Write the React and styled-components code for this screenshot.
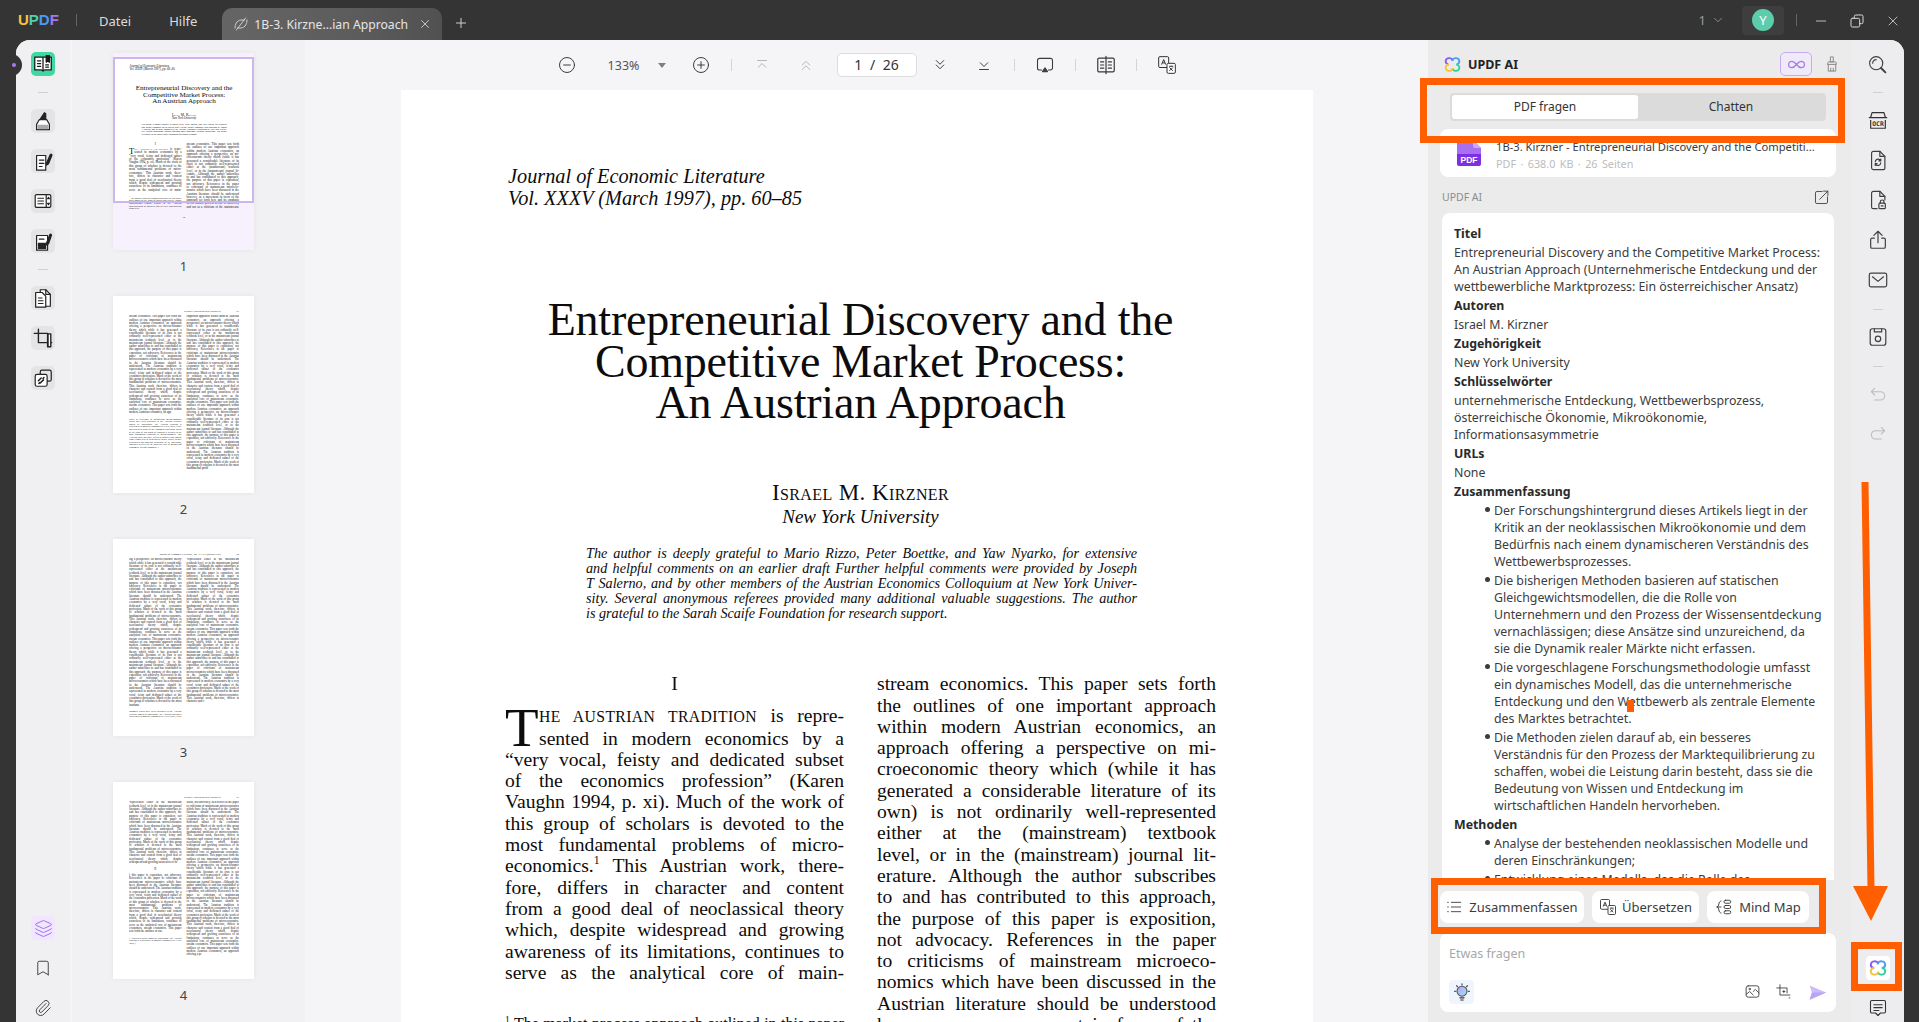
import React from "react";
import styled, { createGlobalStyle } from "styled-components";
import { Layers, Bookmark, Paperclip, Minus, Plus, X, ChevronDown } from "lucide-react";

const GlobalStyle = createGlobalStyle`
  html, body { margin: 0; padding: 0; background: #343434; }
  body { font-family: "Noto Sans", "Open Sans", sans-serif; overflow: hidden; }
  * { box-sizing: border-box; }
`;

const ORANGE = "#ff5f00";
const SERIF = `"Liberation Serif", serif`;

const Shell = styled.div`
  position: relative;
  width: 100%;
  height: 100vh;
  background: #343434;
  display: flex;
  flex-direction: column;
  overflow: hidden;
`;

/* ---------- title bar ---------- */
const TitleBar = styled.header`
  height: 40px;
  flex: none;
  display: flex;
  align-items: flex-start;
  padding-left: 18px;
  color: #e4e4e4;
`;
const Logo = styled.div`
  width: 38px;
  height: 40px;
  font: 700 15px/40px "Liberation Sans", sans-serif;
  display: flex;
`;
const LogoLetter = styled.span`
  color: ${(p) => p.$c};
`;
const BarSep = styled.div`
  width: 1px;
  height: 12px;
  background: #646464;
  margin: ${(p) => (p.$top !== undefined ? p.$top : 14)}px 0 0 ${(p) => p.$ml}px;
`;
const MenuItem = styled.div`
  font-size: 13px;
  line-height: 42px;
  margin-left: ${(p) => p.$ml}px;
  color: #dcdcdc;
`;
const Tab = styled.div`
  width: 220px;
  height: 32px;
  margin: 8px 0 0 25px;
  border-radius: 10px 10px 0 0;
  background: linear-gradient(90deg, #656565, #5c5c5c 60%, #515151);
  display: flex;
  align-items: center;
  padding-left: 11px;
  font-size: 12.2px;
  color: #e6e6e6;
  white-space: nowrap;
`;
const TabTitle = styled.span`
  margin-left: 5px;
  width: 164px;
`;
const NewTab = styled.div`
  margin: 14px 0 0 11px;
  color: #d8d8d8;
  height: 16px;
`;
const BarRight = styled.div`
  margin-left: auto;
  display: flex;
  align-items: center;
  height: 40px;
  padding-right: 18px;
`;
const PageCount = styled.div`
  font-size: 13px;
  color: #9a9a9a;
  display: flex;
  align-items: center;
  gap: 5px;
  margin-right: 17px;
`;
const AvatarTile = styled.div`
  width: 42px;
  height: 29px;
  background: #3e3e3e;
  border-radius: 4px;
  display: flex;
  align-items: center;
  justify-content: center;
`;
const Avatar = styled.div`
  width: 22px;
  height: 22px;
  border-radius: 50%;
  background: #5ccdaa;
  color: #fff;
  font-size: 13px;
  line-height: 22px;
  text-align: center;
`;
const WinBtn = styled.div`
  width: 16px;
  height: 16px;
  margin-left: ${(p) => p.$ml}px;
  color: #dadada;
`;

/* ---------- body ---------- */
const Body = styled.div`
  flex: 1;
  min-height: 0;
  display: flex;
  margin: 0 15px 0 16px;
  border-radius: 14px 14px 0 0;
  overflow: hidden;
  background: #f5f4f6;
`;
const LeftRail = styled.nav`
  width: 54px;
  flex: none;
  background: #f0eff1;
  display: flex;
  flex-direction: column;
  align-items: center;
  padding: 12px 0 0 0;
`;
const Tile = styled.div`
  width: 24px;
  height: 24px;
  flex: none;
  border-radius: 5px;
  background: ${(p) => p.$bg || "#e4e3e5"};
  display: flex;
  align-items: center;
  justify-content: center;
  margin-top: ${(p) => p.$mt || 0}px;
  margin-bottom: ${(p) => p.$mb || 0}px;
`;
const RailRule = styled.div`
  width: 10px;
  height: 1px;
  background: #d0d0d2;
  margin: ${(p) => p.$m}px 0;
  flex: none;
`;
const RailPush = styled.div`
  flex: 1;
`;
const PlainIcon = styled.div`
  height: ${(p) => p.$h || 40}px;
  padding-top: ${(p) => p.$pt || 0}px;
  flex: none;
  display: flex;
  align-items: center;
  color: #444;
`;
const Notch = styled.div`
  position: absolute;
  left: 10px;
  top: 54px;
  width: 12px;
  height: 22px;
  border-radius: 0 11px 11px 0;
  background: #343434;
  &::after {
    content: "";
    position: absolute;
    left: 2px;
    top: 9px;
    width: 4px;
    height: 4px;
    border-radius: 50%;
    background: #a27bea;
  }
`;

/* ---------- thumbnails ---------- */
const ThumbColumn = styled.aside`
  width: 235px;
  flex: none;
  background: #f1f0f2;
  padding: 13px 0 0 41px;
  overflow: hidden;
  border-left: 2px solid #f5f4f6;
`;
const ThumbItem = styled.div`
  width: 141px;
  height: 243px;
  flex: none;
`;
const ThumbSheet = styled.div`
  position: relative;
  width: 141px;
  height: 197px;
  background: #fff;
  overflow: hidden;
  box-shadow: 0 0 5px rgba(0, 0, 0, 0.06);
`;
const ThumbZoom = styled.div`
  zoom: 0.1546;
  width: 912px;
`;
const ViewRect = styled.div`
  position: absolute;
  left: 0;
  top: 4px;
  width: 141px;
  height: 146px;
  border: 2px solid #cdb6ef;
  box-shadow: 0 0 0 400px rgba(165, 105, 245, 0.09);
`;
const ThumbNum = styled.div`
  font-size: 13px;
  line-height: 20px;
  margin-top: 6px;
  text-align: center;
  color: #444;
`;
const MiniPage = styled.div`
  padding: 90px 97px 0 104px;
  font: 19px/21.3px ${SERIF};
  color: #111;
`;
const MiniHead = styled.div`
  display: flex;
  justify-content: flex-end;
  font-size: 17px;
  height: 36px;
  gap: 100px;
`;
const MiniCols = styled.div`
  display: grid;
  grid-template-columns: 339px 339px;
  gap: 33px;
  height: 1040px;
  overflow: hidden;
`;
const MiniCol = styled.div`
  text-align: justify;
`;
const MiniFoot = styled.div`
  font-size: 15px;
  line-height: 16.5px;
  margin-top: 22px;
`;
const MiniSection = styled.div`
  text-align: center;
  margin: 22px 0;
`;

/* ---------- document ---------- */
const Main = styled.main`
  flex: 1;
  min-width: 0;
  display: flex;
  flex-direction: column;
`;
const DocTools = styled.div`
  height: 50px;
  flex: none;
  display: flex;
  align-items: center;
  justify-content: center;
  color: #333;
`;
const Tool = styled.div`
  width: 24px;
  height: 24px;
  flex: none;
  margin-left: ${(p) => p.$ml || 0}px;
  color: ${(p) => (p.$off ? "#b5b5b5" : "#3a3a3a")};
  display: flex;
  align-items: center;
  justify-content: center;
`;
const ZoomLabel = styled.div`
  width: 36px;
  margin-left: 27px;
  font-size: 12.5px;
  color: #555;
  text-align: center;
`;
const Caret = styled.div`
  width: 0;
  height: 0;
  margin-left: 16px;
  margin-right: 12px;
  border-left: 4px solid transparent;
  border-right: 4px solid transparent;
  border-top: 5px solid #808080;
`;
const ToolSep = styled.div`
  width: 1px;
  height: 12px;
  background: #d5d5d5;
  margin-left: ${(p) => p.$ml || 18}px;
`;
const PageInput = styled.div`
  width: 80px;
  height: 24px;
  margin-left: 19px;
  flex: none;
  background: #fff;
  border: 1px solid #dcdcdc;
  border-radius: 5px;
  font-size: 14px;
  line-height: 22px;
  text-align: center;
  color: #333;
  word-spacing: 4px;
`;
const Scroller = styled.div`
  flex: 1;
  min-height: 0;
  overflow: hidden;
  padding-left: 96px;
`;
const Paper = styled.article`
  width: 912px;
  background: #fff;
  color: #0c0c0c;
  font-family: ${SERIF};
  padding: 75px 97px 40px 104px;
`;
const Journal = styled.div`
  font-style: italic;
  font-size: 20.3px;
  line-height: 22px;
  padding-left: 3px;
`;
const PaperTitle = styled.h1`
  margin: 90px 0 0;
  font-weight: 400;
  font-size: 46px;
  line-height: 41.6px;
  text-align: center;
  white-space: nowrap;
  letter-spacing: -0.2px;
`;
const PaperAuthor = styled.div`
  margin-top: 58px;
  font-size: 23px;
  line-height: 22px;
  letter-spacing: 0.4px;
  text-align: center;
  font-variant: small-caps;
`;
const PaperAffil = styled.div`
  margin-top: 1px;
  font-size: 19px;
  line-height: 24px;
  font-style: italic;
  text-align: center;
`;
const Abstract = styled.div`
  margin: 17px 0 0 81px;
  width: 551px;
  font-style: italic;
  font-size: 14.2px;
  line-height: 15.1px;
`;
const Columns = styled.div`
  display: grid;
  grid-template-columns: 339px 339px;
  gap: 33px;
  margin-top: 52px;
`;
const Column = styled.div`
  font-size: 19.6px;
  line-height: 21.3px;
`;
const Line = styled.div`
  white-space: nowrap;
  text-align: justify;
  text-align-last: justify;
`;
const LastLine = styled.div`
  white-space: nowrap;
`;
const SectionNo = styled.div`
  text-align: center;
  margin-bottom: 10.7px;
`;
const DropCap = styled.span`
  float: left;
  width: 34px;
  height: 42px;
  font-size: 55px;
  line-height: 46px;
`;
const SmallCaps = styled.span`
  font-size: 0.8em;
  letter-spacing: 0.4px;
`;
const Sup = styled.sup`
  font-size: 0.6em;
  line-height: 0;
`;
const Footnote = styled.div`
  margin-top: 32px;
  font-size: 16px;
  line-height: 17.5px;
  text-align: justify;
`;
const PageNo = styled.div`
  margin-top: 30px;
  text-align: center;
  font-size: 16px;
`;

/* ---------- AI panel ---------- */
const Panel = styled.section`
  width: 423px;
  flex: none;
  background: #ebebec;
  padding: 0 15px 10px 12px;
  display: flex;
  flex-direction: column;
  min-height: 0;
`;
const PanelHead = styled.div`
  height: 48px;
  flex: none;
  display: flex;
  align-items: center;
  padding-left: 3px;
`;
const PanelName = styled.div`
  margin-left: 6px;
  font-size: 12.5px;
  font-weight: 700;
  color: #222;
`;
const Unlimited = styled.div`
  margin-left: auto;
  width: 32px;
  height: 24px;
  border: 1px solid #c9a9f3;
  border-radius: 5px;
  background: #efe9f8;
  color: #a57de8;
  display: flex;
  align-items: center;
  justify-content: center;
`;
const Broom = styled.div`
  margin: 0 -6px 0 10px;
  width: 20px;
  height: 20px;
  color: #8b8b8b;
`;
const Segmented = styled.div`
  height: 28px;
  flex: none;
  margin: 5px 10px 0;
  padding: 2px;
  background: #dbdbdb;
  border-radius: 4px;
  display: grid;
  grid-template-columns: 1fr 1fr;
`;
const Segment = styled.div`
  background: ${(p) => (p.$on ? "#fff" : "transparent")};
  border-radius: 3px;
  font-size: 12px;
  line-height: 24px;
  text-align: center;
  color: #333;
`;
const FileCard = styled.div`
  height: 48px;
  flex: none;
  margin-top: 8px;
  background: #fff;
  border-radius: 8px;
  display: flex;
  align-items: center;
  padding-left: 17px;
  gap: 15px;
`;
const FileText = styled.div`
  min-width: 0;
  padding-top: 3px;
`;
const FileName = styled.div`
  font-size: 11.2px;
  line-height: 17px;
  color: #3a3a3a;
  white-space: nowrap;
`;
const FileMeta = styled.div`
  margin-top: 1px;
  font-size: 10.8px;
  line-height: 15px;
  word-spacing: 1.6px;
  color: #bcbcbc;
`;
const LabelRow = styled.div`
  height: 36px;
  flex: none;
  display: flex;
  align-items: center;
  justify-content: space-between;
  padding: 4px 6px 0 2px;
  font-size: 10.5px;
  color: #8c8c8c;
`;
const AnswerCard = styled.div`
  flex: 1;
  min-height: 0;
  overflow: hidden;
  margin: 0 2px;
  padding: 10px 12px 0;
  background: #fff;
  border-radius: 8px 8px 0 0;
  font-size: 12.35px;
  line-height: 17px;
  color: #3c3c3c;
  white-space: nowrap;
`;
const Heading = styled.div`
  margin-top: 2px;
  font-weight: 700;
  color: #2a2a2a;
`;
const Para = styled.div`
  margin-top: 2px;
`;
const Bullet = styled.div`
  margin-top: 2px;
  display: flex;
  align-items: flex-start;
`;
const Dot = styled.span`
  width: 5px;
  height: 5px;
  margin: 5px 4px 0 31px;
  border-radius: 50%;
  background: #3c3c3c;
  flex: none;
`;
const Actions = styled.div`
  height: 53px;
  flex: none;
  display: flex;
  gap: 8px;
  padding-top: 11px;
`;
const ActionBtn = styled.div`
  height: 32px;
  width: ${(p) => p.$w}px;
  flex: none;
  background: #fff;
  border-radius: 8px;
  display: flex;
  align-items: center;
  justify-content: center;
  gap: ${(p) => p.$gap || 7}px;
  font-size: 13px;
  color: #3c3c3c;
  white-space: nowrap;
`;
const Composer = styled.div`
  height: 79px;
  flex: none;
  background: #fff;
  border-radius: 8px;
  padding: 12px 9px 0;
  display: flex;
  flex-direction: column;
`;
const Placeholder = styled.div`
  font-size: 12.5px;
  line-height: 18px;
  color: #a8a8a8;
`;
const ComposerRow = styled.div`
  margin-top: 17px;
  display: flex;
  align-items: center;
  height: 24px;
`;
const BulbTile = styled.div`
  width: 25px;
  height: 24px;
  border-radius: 4px;
  background: #eef5fc;
  display: flex;
  align-items: center;
  justify-content: center;
`;
const ComposerIcon = styled.div`
  margin-left: ${(p) => p.$ml}px;
  width: 18px;
  height: 18px;
  color: #444;
`;

/* ---------- right rail ---------- */
const RightRail = styled.nav`
  width: 53px;
  flex: none;
  background: #edecee;
  display: flex;
  flex-direction: column;
  align-items: center;
  padding: 4px 0 0;
  color: #3f3f3f;
`;
const RailSlot = styled.div`
  height: ${(p) => p.$h || 40}px;
  padding-top: ${(p) => p.$pt || 0}px;
  flex: none;
  display: flex;
  align-items: center;
  justify-content: center;
  color: ${(p) => (p.$off ? "#bcbcbc" : "#3f3f3f")};
`;
const AiTile = styled.div`
  width: 24px;
  height: 24px;
  border-radius: 4px;
  background: #fff;
  display: flex;
  align-items: center;
  justify-content: center;
`;

/* ---------- orange marks drawn over the screenshot ---------- */
const Callout = styled.div`
  position: absolute;
  border: 7px solid ${ORANGE};
  pointer-events: none;
`;
const TabsCallout = styled(Callout)`
  left: 1420px;
  top: 78px;
  width: 425px;
  height: 65px;
`;
const ActionsCallout = styled(Callout)`
  left: 1431px;
  top: 878px;
  width: 395px;
  height: 56px;
`;
const AiCallout = styled(Callout)`
  left: 1851px;
  top: 942px;
  width: 51px;
  height: 49px;
`;
const ArrowMark = styled.svg`
  position: absolute;
  left: 1850px;
  top: 478px;
`;
const Speck = styled.div`
  position: absolute;
  left: 1627px;
  top: 700px;
  width: 7px;
  height: 12px;
  background: ${ORANGE};
`;

/* ---------- icons ---------- */
const Ico = ({ s = 20, c = "currentColor", w = 1.3, children }) => (
  <svg viewBox="0 0 24 24" width={s} height={s} fill="none" stroke={c} strokeWidth={w} strokeLinecap="round" strokeLinejoin="round">
    {children}
  </svg>
);

const AiLogo = ({ s = 20 }) => (
  <svg viewBox="0 0 24 24" width={s} height={s} fill="none" strokeWidth="2.3" strokeLinecap="round">
    <path stroke="#8a5cf6" d="M12 6.5C11 3.2 4 2.8 3.4 7.5 3.1 10 5 11.5 6.5 12" />
    <path stroke="#4a9ff5" d="M12 6.5C13 3.2 20 2.8 20.6 7.5 20.9 10 19 11.5 17.5 12" />
    <path stroke="#35d0a0" d="M17.5 12C19 12.5 20.9 14 20.6 16.5 20 21.2 13 20.8 12 17.5" />
    <path stroke="#f7c33c" d="M12 17.5C11 20.8 4 21.2 3.4 16.5 3.1 14 5 12.5 6.5 12" />
  </svg>
);

const BookIcon = () => (
  <Ico s={22} c="#1a1a1a" w={1.4}>
    <path fill="#fff" d="M3 4.500h18v14h-6.600c-1 0-1.800.4-2.400 1-.6-.6-1.400-1-2.400-1H3z" />
    <path d="M12 5v14.500M6 8.500h3.500M6 11.500h3.500M6 14.500h3.500M15 13h3M15 15.500h3" />
    <path fill="#1a1a1a" d="M15.500 3h3.500v7l-1.700-1.400-1.800 1.400z" />
  </Ico>
);
const MarkerIcon = () => (
  <svg viewBox="0 0 24 24" width="22" height="22" fill="none" stroke="#222" strokeWidth="1.3" strokeLinejoin="round">
    <path fill="#222" d="M9 10l4.500-7 1.500 1v6z" />
    <path fill="#fff" d="M8 10.500h8l3 5v6H5v-6z" />
    <path fill="#aaa" stroke="none" d="M6 16h12v5H6z" />
  </svg>
);
const EditDocIcon = () => (
  <Ico s={22} c="#222">
    <path fill="#fff" d="M5 6h10v16H5z" />
    <path d="M8 11h5M8 14.500h5M8 18h3" />
    <path fill="#222" d="M16 14l4-9c.7-1 2-.4 1.700.7L18 15l-2 1.500z" />
  </Ico>
);
const FormIcon = () => (
  <Ico s={22} c="#222">
    <rect x="3.500" y="5" width="17" height="14" rx="1.500" fill="#fff" />
    <path d="M15.500 5v14M6.500 9h6M6.500 12h6M6.500 15h6" />
    <path fill="#222" d="M17 9.500l1-1.500 1 1.500zM17 14.500l1 1.500 1-1.500z" />
  </Ico>
);
const RedactIcon = () => (
  <Ico s={22} c="#222">
    <path fill="#fff" d="M5 6h12v16H5z" />
    <path d="M8 10h5" />
    <path fill="#222" d="M7 14.500h8v3H7zM7 19h8v1H7z" />
    <path fill="#222" d="M16 14l3.500-9c.7-1 2-.4 1.700.7L18 15l-2 1.500z" />
  </Ico>
);
const PagesIcon = () => (
  <Ico s={22} c="#222">
    <path fill="#fff" d="M9 3h6l5 5v13H9z" />
    <path d="M15 3v5h5" />
    <path fill="#fff" d="M4 6h7l4 4v12H4z" />
    <path d="M7 12h4M7 15h5M7 18h5" />
  </Ico>
);
const CropIcon = () => (
  <Ico s={22} c="#222" w={1.5}>
    <path d="M7 2.500V17h14.500M2.500 7H17v14.500" />
    <path d="M17.500 7.500h3v14h-3z" fill="#fff" />
  </Ico>
);
const OverlapIcon = () => (
  <Ico s={22} c="#222">
    <rect x="9" y="3.500" width="12" height="12" rx="2" />
    <rect x="3.500" y="8" width="13" height="13" rx="2" fill="#fff" />
    <path d="M7 15l3-3M9 17.500l3.500-3.500M7.500 18l1-1M12 12.500l1-1" strokeWidth="1.700" />
  </Ico>
);
const TabIcon = () => (
  <svg viewBox="0 0 24 24" width="16" height="16" fill="none" stroke="#cfcfcf" strokeWidth="1.500" strokeLinecap="round">
    <path d="M3 18c0-5 2-11 9-12l5 0" />
    <path d="M21 6c0 5-2 11-9 12l-5 0" />
    <path d="M5 21L19 3" />
  </svg>
);
const InfinityIcon = () => (
  <Ico s={19} w={1.600}>
    <path d="M12 12c-2-2.500-3.500-4-6-4a4 4 0 0 0 0 8c2.500 0 4-1.500 6-4zm0 0c2 2.500 3.500 4 6 4a4 4 0 0 0 0-8c-2.500 0-4 1.500-6 4z" />
  </Ico>
);
const BroomIcon = () => (
  <Ico s={20} w={1.200}>
    <path d="M10.500 3.500h3v6h-3zM7 10.500c0-.600.400-1 1-1h8c.600 0 1 .400 1 1v2H7zM7.500 12.500v8h9v-8M10.500 17v3.500M13.500 17v3.500" />
  </Ico>
);
const PdfBadge = () => (
  <svg viewBox="0 0 24 26" width="24" height="26">
    <path fill="#a86ff0" d="M2 0h14l8 8v10H0V2a2 2 0 0 1 2-2z" />
    <path fill="#7d2fe3" d="M0 14h24v10a2 2 0 0 1-2 2H2a2 2 0 0 1-2-2z" />
    <path fill="#cda8f7" d="M16 0l8 8h-6a2 2 0 0 1-2-2z" />
    <text x="12" y="23" textAnchor="middle" fontSize="8.500" fontWeight="700" fontFamily="Liberation Sans, sans-serif" fill="#fff">PDF</text>
  </svg>
);
const OpenOut = () => (
  <Ico s={17} c="#444">
    <path d="M13 3.500H5.500a2 2 0 0 0-2 2v13a2 2 0 0 0 2 2h13a2 2 0 0 0 2-2V11" />
    <path d="M9.500 14.500L21 3M15 3h6v6" />
  </Ico>
);
const ListIcon = () => (
  <Ico s={16} c="#333">
    <path d="M8 5h14M8 12h14M8 19h14M2.500 5h1M2.500 12h1M2.500 19h1" />
  </Ico>
);
const TranslateIcon = ({ s = 18 }) => (
  <svg viewBox="0 0 24 24" width={s} height={s} fill="none" stroke="#333" strokeWidth="1.200" strokeLinejoin="round">
    <rect x="2" y="2" width="12" height="13" rx="1.500" />
    <rect x="12" y="10" width="10" height="12" rx="1.500" fill="#fff" />
    <path d="M5.500 11.500L8 5.500l2.500 6M6.500 9.500h3M14.500 13.500h5M17 13v1M15 19l4-4M15 15l4 4" />
  </svg>
);
const MindIcon = () => (
  <Ico s={18} c="#333" w={1.200}>
    <path d="M8 4C4 4 6 12 2.500 12 6 12 4 20 8 20M2.500 12H8" />
    <rect x="12" y="3" width="9" height="4" rx="2" />
    <rect x="12" y="10" width="9" height="4" rx="2" />
    <rect x="12" y="17" width="9" height="4" rx="2" />
  </Ico>
);
const BulbIcon = () => (
  <svg viewBox="0 0 24 24" width="20" height="20" fill="none" stroke="#333" strokeWidth="1.300" strokeLinecap="round">
    <defs>
      <linearGradient id="bulbFill" x1="0" y1="0" x2="1" y2="1">
        <stop offset="0" stopColor="#a9a6f5" />
        <stop offset="1" stopColor="#a8dcf6" />
      </linearGradient>
    </defs>
    <circle cx="12" cy="11" r="6" fill="url(#bulbFill)" stroke="#555" />
    <path d="M9.500 19h5M10.500 21.500h3M12 2v1.500M3 11h1.500M19.500 11H21M5.500 4.500l1 1M18.500 4.500l-1 1" />
  </svg>
);
const ImageIcon = () => (
  <Ico s={17}>
    <rect x="3" y="4" width="18" height="16" rx="3" />
    <path d="M3 16l5-4 5 5M13 12l3-3 5 5" />
    <circle cx="8" cy="8.500" r="1" />
  </Ico>
);
const SnipIcon = () => (
  <Ico s={17}>
    <path d="M7 2.500V17h14M2.500 7H17v7" />
    <path d="M11 12h3M12.500 10.500v3M20 21h1" />
  </Ico>
);
const SendIcon = () => (
  <svg viewBox="0 0 24 24" width="19" height="19">
    <path fill="#cdbcf8" d="M2 3l21 9-21 9 3-9z" />
    <path fill="#b9a4f5" d="M5 12h18L2 21z" />
  </svg>
);
const SearchIcon = () => (
  <Ico s={21}>
    <circle cx="10.500" cy="10.500" r="7.500" />
    <path d="M6.500 10.500a4 4 0 0 1 4-4" />
    <path d="M16 16l5 5" strokeWidth="2.200" />
  </Ico>
);
const OcrIcon = () => (
  <svg viewBox="0 0 24 24" width="22" height="22" fill="none" stroke="#333" strokeWidth="1.300" strokeLinejoin="round">
    <path d="M4 9l1.500-5h13L20 9M2 9.500h20M4 12v9h16v-9" />
    <text x="12" y="19" textAnchor="middle" fontSize="7" fontWeight="700" stroke="none" fill="#333" fontFamily="DejaVu Sans Mono, monospace">OCR</text>
  </svg>
);
const ConvertIcon = () => (
  <Ico s={22}>
    <path d="M5 4.500a2 2 0 0 1 2-2h7l5.500 5.500v13a1.500 1.500 0 0 1-1.500 1.500H7a2 2 0 0 1-2-2z" />
    <path d="M14 2.500v5.500h5.500" />
    <path d="M9 14a3 3 0 0 1 5-2.200l1 1M15 15a3 3 0 0 1-5 2.200l-1-1M15 11v2h-2M9 18v-2h2" />
  </Ico>
);
const LockDocIcon = () => (
  <Ico s={22}>
    <path d="M11 21.500H7a2 2 0 0 1-2-2v-15a2 2 0 0 1 2-2h7l5.500 5.500v4" />
    <path d="M14 2.500V8h5.500" />
    <rect x="13" y="15.500" width="7" height="6" rx="1" />
    <path d="M14.500 15.500V14a2 2 0 0 1 4 0v1.500M15.500 18.500h2" />
  </Ico>
);
const ShareIcon = () => (
  <Ico s={22}>
    <path d="M8 10H5.500a1.500 1.500 0 0 0-1.500 1.500v8A1.500 1.500 0 0 0 5.500 21h13a1.500 1.500 0 0 0 1.500-1.500v-8a1.500 1.500 0 0 0-1.500-1.500H16" />
    <path d="M12 15V2.500M7.500 7L12 2.500 16.500 7" />
  </Ico>
);
const MailIcon = () => (
  <Ico s={22}>
    <rect x="2.500" y="4.500" width="19" height="15" rx="2" />
    <path d="M6 8.500l6 5 6-5" />
  </Ico>
);
const SaveIcon = () => (
  <Ico s={22}>
    <rect x="3.500" y="3" width="17" height="18" rx="2.500" />
    <path d="M8 3v3.500h8V3" />
    <circle cx="12" cy="14" r="3" />
  </Ico>
);
const UndoIcon = () => (
  <Ico s={20}>
    <path d="M8 4L4 8l4 4M4 8h11a5 5 0 0 1 0 10H8" />
  </Ico>
);
const RedoIcon = () => (
  <Ico s={20}>
    <path d="M16 4l4 4-4 4M20 8H9a5 5 0 0 0 0 10h7" />
  </Ico>
);
const CommentIcon = () => (
  <Ico s={20} c="#333">
    <path d="M4.500 3h15A1.500 1.500 0 0 1 21 4.500v12a1.500 1.500 0 0 1-1.500 1.500H15l-3 3-3-3H4.500A1.500 1.500 0 0 1 3 16.500v-12A1.500 1.500 0 0 1 4.500 3z" />
    <path d="M7 8h10M7 11.500h10M7 15h6" />
  </Ico>
);
const ZoomOutIcon = () => (
  <Ico s={18}>
    <circle cx="12" cy="12" r="10" />
    <path d="M7.500 12h9" />
  </Ico>
);
const ZoomInIcon = () => (
  <Ico s={18}>
    <circle cx="12" cy="12" r="10" />
    <path d="M7.500 12h9M12 7.500v9" />
  </Ico>
);
const FirstIcon = () => (
  <Ico s={18}>
    <path d="M6 6h12M7 15l5-5 5 5" />
  </Ico>
);
const PrevIcon = () => (
  <Ico s={18}>
    <path d="M7 12l5-5 5 5M7 18l5-5 5 5" />
  </Ico>
);
const NextIcon = () => (
  <Ico s={18}>
    <path d="M7 6l5 5 5-5M7 12l5 5 5-5" />
  </Ico>
);
const LastIcon = () => (
  <Ico s={18}>
    <path d="M7 9l5 5 5-5M6 18h12" />
  </Ico>
);
const PresentIcon = () => (
  <Ico s={20}>
    <path d="M8 18H5.500A2.500 2.500 0 0 1 3 15.500v-9A2.500 2.500 0 0 1 5.500 4h13A2.500 2.500 0 0 1 21 6.500v9a2.500 2.500 0 0 1-2.500 2.500H16" />
    <path fill="currentColor" d="M12 15.500l3 4.500H9z" />
  </Ico>
);
const CompareIcon = () => (
  <Ico s={22}>
    <rect x="3" y="4.500" width="18" height="15" rx="1.500" />
    <path d="M12 2.500v19M6 8.500h3.500M6 12h3.500M6 15.500h3.500M14.500 8.500H18M14.500 12H18M14.500 15.500H18" />
  </Ico>
);

/* ---------- thumbnail filler ---------- */
const FILLER =
  "stream economics. This paper sets forth the outlines of one important approach within modern Austrian economics, an approach offering a perspective on microeconomic theory which while it has generated a considerable literature of its own is not ordinarily well-represented either at the mainstream textbook level, or in the mainstream journal literature. Although the author subscribes to and has contributed to this approach, the purpose of this paper is exposition, not advocacy. References in the paper to criticisms of mainstream microeconomics which have been discussed in the Austrian literature should be understood. The Austrian tradition is represented in modern economics by a very vocal, feisty and dedicated subset of the economics profession. Much of the work of this group of scholars is devoted to the most fundamental problems of microeconomics. This Austrian work, therefore, differs in character and content from a good deal of neoclassical theory which, despite widespread and growing awareness of its limitations, continues to serve as the analytical core of mainstream economics. ";
const fill = (offset, length) => (FILLER + FILLER + FILLER).slice(offset, offset + length);

const MINI_PAGES = [
  { head: "Kirzner: Entrepreneurial Discovery", no: 61, left: 1220, right: 1880, foot: 620 },
  { head: "Journal of Economic Literature, Vol. XXXV (March 1997)", no: 62, left: 1800, right: 1760, foot: 300 },
  { head: "Kirzner: Entrepreneurial Discovery", no: 63, left: 760, right: 1880, section: "II", after: 720, foot: 120 },
];

const MiniSheet = ({ page, index }) => (
  <MiniPage>
    <MiniHead>
      <span>{page.head}</span>
      <span>{page.no}</span>
    </MiniHead>
    <MiniCols>
      <MiniCol>
        {fill(index * 130, page.left)}
        {page.section && <MiniSection>{page.section}</MiniSection>}
        {page.after && fill(index * 70 + 300, page.after)}
        <MiniFoot>{fill(index * 40 + 500, page.foot)}</MiniFoot>
      </MiniCol>
      <MiniCol>{fill(index * 200 + 60, page.right)}</MiniCol>
    </MiniCols>
  </MiniPage>
);

const PaperSheet = () => (
  <Paper>
    <Journal>
      Journal of Economic Literature
      <br />
      Vol. XXXV (March 1997), pp. 60–85
    </Journal>
    <PaperTitle>
      Entrepreneurial Discovery and the
      <br />
      Competitive Market Process:
      <br />
      An Austrian Approach
    </PaperTitle>
    <PaperAuthor>Israel M. Kirzner</PaperAuthor>
    <PaperAffil>New York University</PaperAffil>
    <Abstract>
      <Line>The author is deeply grateful to Mario Rizzo, Peter Boettke, and Yaw Nyarko, for extensive</Line>
      <Line>and helpful comments on an earlier draft  Further helpful comments were provided by Joseph</Line>
      <Line>T  Salerno, and by other members of the Austrian Economics Colloquium at New York Univer-</Line>
      <Line>sity. Several anonymous referees provided many additional valuable suggestions. The author</Line>
      <LastLine>is grateful to the Sarah Scaife Foundation for research support.</LastLine>
    </Abstract>
    <Columns>
      <Column>
        <SectionNo>I</SectionNo>
        <DropCap>T</DropCap>
        <Line>
          <SmallCaps>HE AUSTRIAN TRADITION</SmallCaps> is repre-
        </Line>
        <Line>sented in modern economics by a</Line>
        <Line>“very vocal, feisty and dedicated subset</Line>
        <Line>of the economics profession” (Karen</Line>
        <Line>Vaughn 1994, p. xi). Much of the work of</Line>
        <Line>this group of scholars is devoted to the</Line>
        <Line>most fundamental problems of micro-</Line>
        <Line>
          economics.<Sup>1</Sup> This Austrian work, there-
        </Line>
        <Line>fore, differs in character and content</Line>
        <Line>from a good deal of neoclassical theory</Line>
        <Line>which, despite widespread and growing</Line>
        <Line>awareness of its limitations, continues to</Line>
        <Line>serve as the analytical core of main-</Line>
        <Footnote>
          <Sup>1</Sup> The market process approach outlined in this paper owes much to the work of Mises and Hayek, whose contributions remain central to the Austrian understanding of markets and of their coordinating properties.
        </Footnote>
      </Column>
      <Column>
        <Line>stream economics. This paper sets forth</Line>
        <Line>the outlines of one important approach</Line>
        <Line>within modern Austrian economics, an</Line>
        <Line>approach offering a perspective on mi-</Line>
        <Line>croeconomic theory which (while it has</Line>
        <Line>generated a considerable literature of its</Line>
        <Line>own) is not ordinarily well-represented</Line>
        <Line>either at the (mainstream) textbook</Line>
        <Line>level, or in the (mainstream) journal lit-</Line>
        <Line>erature. Although the author subscribes</Line>
        <Line>to and has contributed to this approach,</Line>
        <Line>the purpose of this paper is exposition,</Line>
        <Line>not advocacy. References in the paper</Line>
        <Line>to criticisms of mainstream microeco-</Line>
        <Line>nomics which have been discussed in the</Line>
        <Line>Austrian literature should be understood</Line>
        <Line>however, as a movement in favor of the</Line>
        <Line>approach set forth here and its emphasis</Line>
        <Line>on the market process as one of discovery</Line>
        <Line>and not as a criticism of the mainstream.</Line>
      </Column>
    </Columns>
    <PageNo>60</PageNo>
  </Paper>
);

const App = () => (
  <Shell>
    <GlobalStyle />
    <TitleBar>
      <Logo>
        <LogoLetter $c="#f5c53a">U</LogoLetter>
        <LogoLetter $c="#4fd0a4">P</LogoLetter>
        <LogoLetter $c="#4a9cf0">D</LogoLetter>
        <LogoLetter $c="#a278ee">F</LogoLetter>
      </Logo>
      <BarSep $ml={20} />
      <MenuItem $ml={22}>Datei</MenuItem>
      <MenuItem $ml={38}>Hilfe</MenuItem>
      <Tab>
        <TabIcon />
        <TabTitle>1B-3. Kirzne...ian Approach</TabTitle>
        <X size={14} strokeWidth={1.4} color="#dcdcdc" />
      </Tab>
      <NewTab>
        <Plus size={16} strokeWidth={1.4} />
      </NewTab>
      <BarRight>
        <PageCount>
          1 <ChevronDown size={14} strokeWidth={1.4} />
        </PageCount>
        <AvatarTile>
          <Avatar>Y</Avatar>
        </AvatarTile>
        <BarSep $ml={12} $top={0} />
        <WinBtn $ml={16}>
          <Minus size={16} strokeWidth={1.2} />
        </WinBtn>
        <WinBtn $ml={20}>
          <Ico s={16} w={1.500}>
            <rect x="3" y="8" width="13" height="13" rx="2" />
            <path d="M8 8V5a2 2 0 0 1 2-2h9a2 2 0 0 1 2 2v9a2 2 0 0 1-2 2h-3" />
          </Ico>
        </WinBtn>
        <WinBtn $ml={20}>
          <X size={16} strokeWidth={1.2} />
        </WinBtn>
      </BarRight>
    </TitleBar>

    <Body>
      <LeftRail>
        <Tile $bg="#3fd7a2">
          <BookIcon />
        </Tile>
        <RailRule $m={16} />
        <Tile>
          <MarkerIcon />
        </Tile>
        <Tile $mt={16}>
          <EditDocIcon />
        </Tile>
        <Tile $mt={16}>
          <FormIcon />
        </Tile>
        <Tile $mt={16}>
          <RedactIcon />
        </Tile>
        <RailRule $m={16} />
        <Tile>
          <PagesIcon />
        </Tile>
        <Tile $mt={16}>
          <CropIcon />
        </Tile>
        <Tile $mt={16}>
          <OverlapIcon />
        </Tile>
        <RailPush />
        <Tile $bg="#f1e5ff" $mb={8}>
          <Layers size={19} strokeWidth={1.2} color="#9a6ee8" />
        </Tile>
        <PlainIcon>
          <Bookmark size={18} strokeWidth={1.3} />
        </PlainIcon>
        <PlainIcon $h={34} $pt={6}>
          <Paperclip size={18} strokeWidth={1.3} />
        </PlainIcon>
      </LeftRail>

      <ThumbColumn>
        <ThumbItem>
          <ThumbSheet>
            <ThumbZoom>
              <PaperSheet />
            </ThumbZoom>
            <ViewRect />
          </ThumbSheet>
          <ThumbNum>1</ThumbNum>
        </ThumbItem>
        {MINI_PAGES.map((page, index) => (
          <ThumbItem key={page.no}>
            <ThumbSheet>
              <ThumbZoom>
                <MiniSheet page={page} index={index} />
              </ThumbZoom>
            </ThumbSheet>
            <ThumbNum>{index + 2}</ThumbNum>
          </ThumbItem>
        ))}
      </ThumbColumn>

      <Main>
        <DocTools>
          <Tool>
            <ZoomOutIcon />
          </Tool>
          <ZoomLabel>133%</ZoomLabel>
          <Caret />
          <Tool $ml={11}>
            <ZoomInIcon />
          </Tool>
          <ToolSep />
          <Tool $ml={18} $off>
            <FirstIcon />
          </Tool>
          <Tool $ml={20} $off>
            <PrevIcon />
          </Tool>
          <PageInput>1 / 26</PageInput>
          <Tool $ml={11}>
            <NextIcon />
          </Tool>
          <Tool $ml={20}>
            <LastIcon />
          </Tool>
          <ToolSep />
          <Tool $ml={18}>
            <PresentIcon />
          </Tool>
          <ToolSep />
          <Tool $ml={18}>
            <CompareIcon />
          </Tool>
          <ToolSep />
          <Tool $ml={18}>
            <TranslateIcon s={20} />
          </Tool>
        </DocTools>
        <Scroller>
          <PaperSheet />
        </Scroller>
      </Main>

      <Panel>
        <PanelHead>
          <AiLogo s={19} />
          <PanelName>UPDF AI</PanelName>
          <Unlimited>
            <InfinityIcon />
          </Unlimited>
          <Broom>
            <BroomIcon />
          </Broom>
        </PanelHead>
        <Segmented>
          <Segment $on>PDF fragen</Segment>
          <Segment>Chatten</Segment>
        </Segmented>
        <FileCard>
          <PdfBadge />
          <FileText>
            <FileName>1B-3. Kirzner - Entrepreneurial Discovery and the Competiti...</FileName>
            <FileMeta>PDF · 638.0 KB · 26 Seiten</FileMeta>
          </FileText>
        </FileCard>
        <LabelRow>
          UPDF AI
          <OpenOut />
        </LabelRow>
        <AnswerCard>
          <Heading>Titel</Heading>
          <Para>
            Entrepreneurial Discovery and the Competitive Market Process:
            <br />
            An Austrian Approach (Unternehmerische Entdeckung und der
            <br />
            wettbewerbliche Marktprozess: Ein österreichischer Ansatz)
          </Para>
          <Heading>Autoren</Heading>
          <Para>Israel M. Kirzner</Para>
          <Heading>Zugehörigkeit</Heading>
          <Para>New York University</Para>
          <Heading>Schlüsselwörter</Heading>
          <Para>
            unternehmerische Entdeckung, Wettbewerbsprozess,
            <br />
            österreichische Ökonomie, Mikroökonomie,
            <br />
            Informationsasymmetrie
          </Para>
          <Heading>URLs</Heading>
          <Para>None</Para>
          <Heading>Zusammenfassung</Heading>
          <Bullet>
            <Dot />
            <span>
              Der Forschungshintergrund dieses Artikels liegt in der
              <br />
              Kritik an der neoklassischen Mikroökonomie und dem
              <br />
              Bedürfnis nach einem dynamischeren Verständnis des
              <br />
              Wettbewerbsprozesses.
            </span>
          </Bullet>
          <Bullet>
            <Dot />
            <span>
              Die bisherigen Methoden basieren auf statischen
              <br />
              Gleichgewichtsmodellen, die die Rolle von
              <br />
              Unternehmern und den Prozess der Wissensentdeckung
              <br />
              vernachlässigen; diese Ansätze sind unzureichend, da
              <br />
              sie die Dynamik realer Märkte nicht erfassen.
            </span>
          </Bullet>
          <Bullet>
            <Dot />
            <span>
              Die vorgeschlagene Forschungsmethodologie umfasst
              <br />
              ein dynamisches Modell, das die unternehmerische
              <br />
              Entdeckung und den Wettbewerb als zentrale Elemente
              <br />
              des Marktes betrachtet.
            </span>
          </Bullet>
          <Bullet>
            <Dot />
            <span>
              Die Methoden zielen darauf ab, ein besseres
              <br />
              Verständnis für den Prozess der Marktequilibrierung zu
              <br />
              schaffen, wobei die Leistung darin besteht, dass sie die
              <br />
              Bedeutung von Wissen und Entdeckung im
              <br />
              wirtschaftlichen Handeln hervorheben.
            </span>
          </Bullet>
          <Heading>Methoden</Heading>
          <Bullet>
            <Dot />
            <span>
              Analyse der bestehenden neoklassischen Modelle und
              <br />
              deren Einschränkungen;
            </span>
          </Bullet>
          <Bullet>
            <Dot />
            <span>Entwicklung eines Modells, das die Rolle des</span>
          </Bullet>
        </AnswerCard>
        <Actions>
          <ActionBtn $w={144}>
            <ListIcon />
            Zusammenfassen
          </ActionBtn>
          <ActionBtn $w={107} $gap={5}>
            <TranslateIcon />
            Übersetzen
          </ActionBtn>
          <ActionBtn $w={102} $gap={6}>
            <MindIcon />
            Mind Map
          </ActionBtn>
        </Actions>
        <Composer>
          <Placeholder>Etwas fragen</Placeholder>
          <ComposerRow>
            <BulbTile>
              <BulbIcon />
            </BulbTile>
            <ComposerIcon $ml={270}>
              <ImageIcon />
            </ComposerIcon>
            <ComposerIcon $ml={13}>
              <SnipIcon />
            </ComposerIcon>
            <ComposerIcon $ml={15}>
              <SendIcon />
            </ComposerIcon>
          </ComposerRow>
        </Composer>
      </Panel>

      <RightRail>
        <RailSlot>
          <SearchIcon />
        </RailSlot>
        <RailSlot $h={16}>
          <RailRule $m={0} />
        </RailSlot>
        <RailSlot>
          <OcrIcon />
        </RailSlot>
        <RailSlot>
          <ConvertIcon />
        </RailSlot>
        <RailSlot>
          <LockDocIcon />
        </RailSlot>
        <RailSlot>
          <ShareIcon />
        </RailSlot>
        <RailSlot>
          <MailIcon />
        </RailSlot>
        <RailSlot $h={18}>
          <RailRule $m={0} />
        </RailSlot>
        <RailSlot $h={38}>
          <SaveIcon />
        </RailSlot>
        <RailSlot $h={20}>
          <RailRule $m={0} />
        </RailSlot>
        <RailSlot $h={38} $off>
          <UndoIcon />
        </RailSlot>
        <RailSlot $off>
          <RedoIcon />
        </RailSlot>
        <RailPush />
        <RailSlot>
          <AiTile>
            <AiLogo s={20} />
          </AiTile>
        </RailSlot>
        <RailSlot $h={34} $pt={6}>
          <CommentIcon />
        </RailSlot>
      </RightRail>
    </Body>

    <Notch />
    <TabsCallout />
    <ActionsCallout />
    <AiCallout />
    <Speck />
    <ArrowMark width="44" height="446" viewBox="0 0 44 446">
      <path d="M15 4L21 410" stroke={ORANGE} strokeWidth="7" />
      <path d="M3 408h35l-17 35z" fill={ORANGE} />
    </ArrowMark>
  </Shell>
);

export default App;
